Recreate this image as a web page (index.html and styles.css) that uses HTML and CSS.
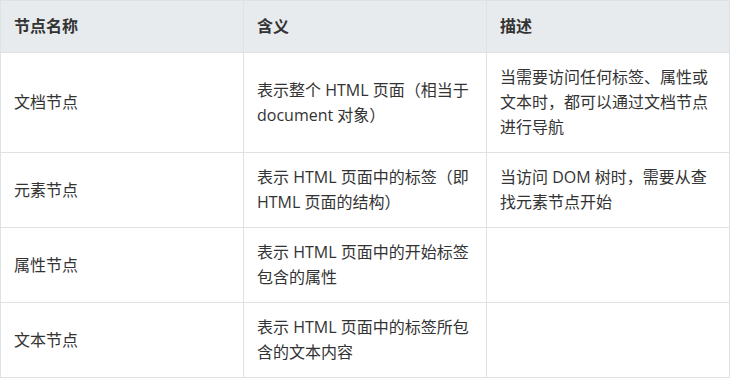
FILE: index.html
```html
<!DOCTYPE html>
<html lang="zh-CN">
<head>
<meta charset="utf-8">
<link rel="stylesheet" href="styles.css">
</head>
<body>
<table class="node-table">
  <colgroup><col><col><col></colgroup>
  <thead>
    <tr><th>节点名称</th><th>含义</th><th>描述</th></tr>
  </thead>
  <tbody>
    <tr>
      <td>文档节点</td>
      <td>表示整个 HTML 页面（相当于 document 对象）</td>
      <td>当需要访问任何标签、属性或文本时，都可以通过文档节点进行导航</td>
    </tr>
    <tr>
      <td>元素节点</td>
      <td>表示 HTML 页面中的标签（即 HTML 页面的结构）</td>
      <td>当访问 DOM 树时，需要从查找元素节点开始</td>
    </tr>
    <tr>
      <td>属性节点</td>
      <td>表示 HTML 页面中的开始标签包含的属性</td>
      <td></td>
    </tr>
    <tr>
      <td>文本节点</td>
      <td>表示 HTML 页面中的标签所包含的文本内容</td>
      <td></td>
    </tr>
  </tbody>
</table>
</body>
</html>
```
FILE: styles.css
```css
html, body {
  margin: 0;
  padding: 0;
  background: #fff;
}
body {
  font-family: "Open Sans", "Noto Sans CJK SC", sans-serif;
  font-size: 16px;
  color: #333;
}
.node-table {
  width: 730px;
  table-layout: fixed;
  border-collapse: collapse;
  border: 1px solid #dfe2e5;
}
.node-table th,
.node-table td {
  border: 1px solid #dfe2e5;
  padding: 12px 13px;
  line-height: 25px;
  text-align: left;
  vertical-align: middle;
  word-break: break-all;
}
.node-table th {
  background: #e8ebee;
  font-weight: bold;
  padding-top: 13px;
  padding-bottom: 13px;
}
```
